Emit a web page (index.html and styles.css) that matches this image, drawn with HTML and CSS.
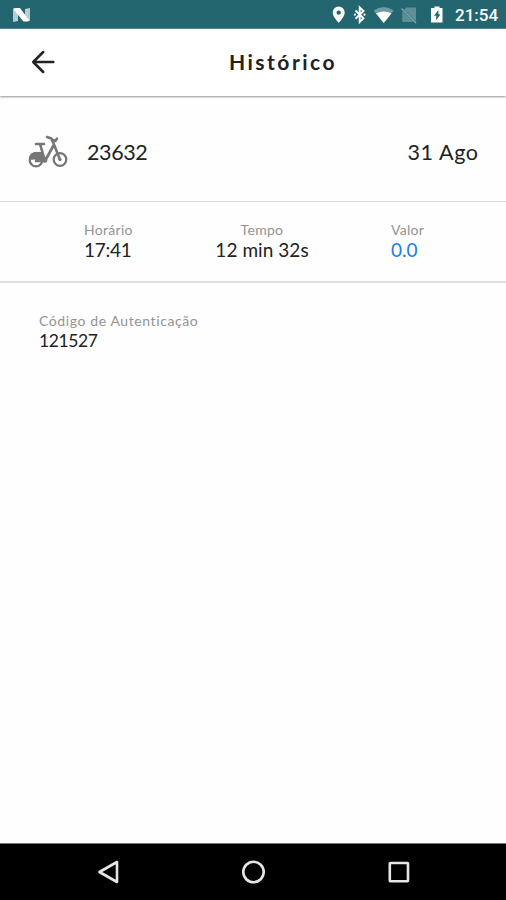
FILE: index.html
```html
<!DOCTYPE html>
<html lang="pt-BR">
<head>
<meta charset="utf-8">
<title>Histórico</title>
<link rel="stylesheet" href="styles.css">
</head>
<body>
<div class="screen">
  <div class="status">
    <svg class="status-left" width="40" height="28" viewBox="0 0 40 28">
      <path d="M13 8.500h5v12.500l-5 1z" fill="#b5ced1"/><path d="M25 9l5-1v13h-5z" fill="#b5ced1"/>
      <path d="M14.500 8h5.500l9 12-1 1.500h-4.500L14 10z" fill="#fff"/>
    </svg>
    <svg class="status-icons" width="120" height="28" viewBox="0 0 120 28">
      <path fill="#fff" fill-rule="evenodd" d="M8.700 6.500a6 6 0 0 0-6 6c0 4.300 6 10.300 6 10.300s6-6 6-10.300a6 6 0 0 0-6-6zm0 3.900a2.200 2.200 0 1 1 0 4.400 2.200 2.200 0 0 1 0-4.400z"/>
      <path fill="none" stroke="#fff" stroke-width="1.900" d="M25.500 10.500l8 7.800-3.800 3.700V7.500l3.800 3.500-8 7.800"/>
      <circle cx="25" cy="14.700" r="1.100" fill="#fff"/><circle cx="34.500" cy="14.700" r="1.100" fill="#fff"/>
      <path fill="#6c9ca2" d="M43.500 10.500Q53.500 3.500 63.800 10.500L53.700 23z"/>
      <path fill="#fff" d="M46 13.200Q53.500 9.600 61.600 13.200L53.700 23z"/>
      <path fill="#5c8f96" d="M76.500 7.500H86v14L73.800 9.600z M72.300 11L83.500 22H72.300z"/>
      <path stroke="#7ba6ab" stroke-width="1.500" d="M71.500 8.500l14.500 14.500"/>
      <path fill="#fff" d="M104.500 6.500h5v1.500h3v14.500h-11.500V8h3.500z"/>
      <path fill="#24666f" d="M108.500 10l-4.500 5.800h2.200v4.400l4.300-5.900h-2.200z"/>
    </svg>
    <span class="clock">21:54</span>
  </div>
  <header class="header">
    <svg class="back" width="24" height="24" viewBox="0 0 24 24"><path d="M22.300 12H3M12.200 2L2.200 12l10 10" fill="none" stroke="#222" stroke-width="2.500" stroke-linecap="round" stroke-linejoin="round"/></svg>
    <h1 class="title">Histórico</h1>
  </header>
  <main class="content">
    <section class="trip">
      <svg class="bike" width="40" height="34" viewBox="0 0 40 34" fill="none" stroke="#777" stroke-width="2.300">
        <circle cx="8" cy="25" r="6.300"/><circle cx="32" cy="24.500" r="6.300"/>
        <path d="M1 25C1 19 4 17 8 17h6l2.500 9.500H9L7 24.500z" fill="#777" stroke="none"/>
        <path d="M19 2l4.500 1.500 8.500 21M23.500 4.500l3.800 1.500 1.700-2.500M8 9h8M12 9l5 17 8.500-15.500M17 26H8" stroke-width="2.600" stroke-linecap="round" stroke-linejoin="round"/>
        <circle cx="17" cy="25.500" r="2.300" fill="#777" stroke="none"/><circle cx="32" cy="24.500" r="1.600" fill="#777" stroke="none"/>
      </svg>
      <span class="number">23632</span>
      <span class="date">31 Ago</span>
    </section>
    <section class="details">
      <div class="item time"><span class="label">Horário</span><span class="value">17:41</span></div>
      <div class="item duration"><span class="label">Tempo</span><span class="value">12 min 32s</span></div>
      <div class="item price"><span class="label">Valor</span><span class="value">0.0</span></div>
    </section>
    <section class="auth">
      <span class="label">Código de Autenticação</span>
      <span class="value">121527</span>
    </section>
  </main>
  <nav class="navbar">
    <svg width="24" height="24" viewBox="0 0 24 24"><path d="M20 2v20L2.500 12z"/></svg>
    <svg width="24" height="24" viewBox="0 0 24 24"><circle cx="11.500" cy="12" r="10.200"/></svg>
    <svg width="24" height="24" viewBox="0 0 24 24"><rect x="2.800" y="3" width="18.200" height="18.200" rx=".6"/></svg>
  </nav>
</div>
</body>
</html>
```

FILE: styles.css
```css
* { box-sizing: border-box; }
body { margin: 0; font-family: Lato, "Liberation Sans", sans-serif; color: #222; background: #fff; }
.screen { width: 506px; height: 900px; display: flex; flex-direction: column; background: #fefefe; }
.status { height: 29px; flex: none; display: flex; background: #24666f; border-bottom: 1px solid #528891; }
.status svg { display: block; }
.status-icons { margin-left: auto; }
.clock { width: 56px; padding: 0 0 0 5px; font: 500 17px/30px Roboto, sans-serif; color: #fff; white-space: nowrap; }
.header { height: 67px; flex: none; display: flex; align-items: center; padding: 0 0 1px 31px; background: #fff; box-shadow: 0 1px 2px rgba(0, 0, 0, .42); }
.title { margin: 0 0 0 174px; font-size: 21px; line-height: 28px; font-weight: 700; letter-spacing: 2.5px; white-space: nowrap; }
.content { flex: 1; }
.trip { height: 106px; display: flex; align-items: center; padding: 7px 28px 0; border-bottom: 1px solid #dedede; font-size: 21.500px; }
.bike { margin-right: 19px; }
.number { letter-spacing: -.4px; }
.date { margin-left: auto; letter-spacing: .6px; margin-right: -.6px; }
.details { height: 81px; display: grid; grid-template-columns: 178px 168px 160px; padding-top: 18px; border-bottom: 2px solid #e0e0e0; }
.item { display: flex; flex-direction: column; }
.time { padding-left: 84px; }
.time .value { letter-spacing: -.25px; }
.duration { align-items: center; }
.price { padding-left: 45px; }
.label { font-size: 14px; line-height: 19px; letter-spacing: .3px; color: #939393; white-space: nowrap; }
.value { font-size: 19px; line-height: 22px; letter-spacing: .05px; white-space: nowrap; }
.price .value { color: #1680e8; }
.auth { display: flex; flex-direction: column; padding: 28px 0 0 39px; }
.auth .label { letter-spacing: .6px; }
.auth .value { font-size: 17.500px; line-height: 21px; letter-spacing: -.4px; }
.navbar { height: 57px; flex: none; display: flex; align-items: center; justify-content: space-between; padding: 0 95px 0 97px; background: #000; border-top: 1px solid #777; }
.navbar svg { fill: none; stroke: #e6e6e6; stroke-width: 2.6; stroke-linejoin: round; }
```
